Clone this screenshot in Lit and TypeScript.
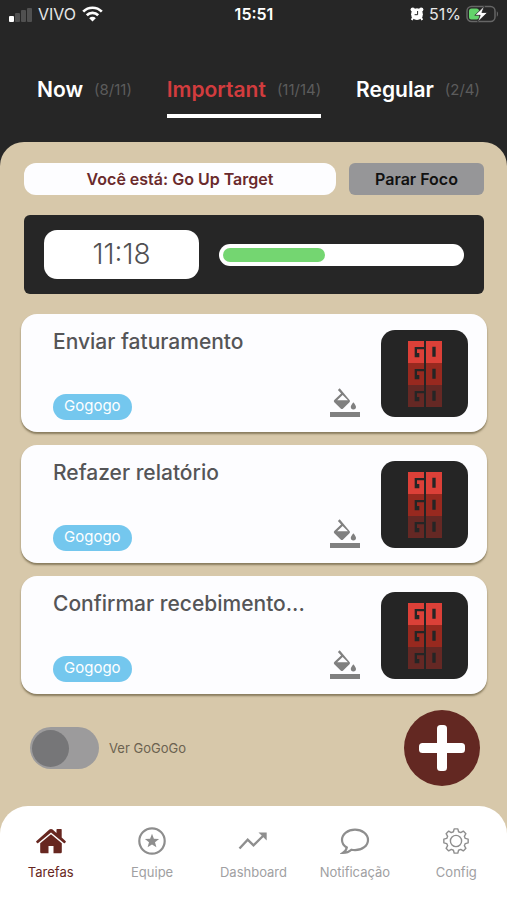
import { LitElement, html, css, svg } from "lit";
import { customElement, property, state } from "lit/decorators.js";
import { classMap } from "lit/directives/class-map.js";
import { styleMap } from "lit/directives/style-map.js";

const base = css`
  * {
    box-sizing: border-box;
  }
  svg {
    display: block;
    flex: none;
  }
  button {
    font: inherit;
    color: inherit;
    border: 0;
    padding: 0;
    background: none;
    cursor: pointer;
  }
`;

@customElement("status-bar")
class StatusBar extends LitElement {
  static styles = [
    base,
    css`
      :host {
        display: grid;
        grid-template-columns: 1fr auto 1fr;
        align-items: center;
        height: 28px;
        padding: 0 8px 0 9px;
        font-size: 16px;
        line-height: 20px;
        color: #e8e8e8;
      }
      .side {
        display: flex;
        align-items: center;
        gap: 6px;
      }
      .end {
        justify-content: flex-end;
        gap: 5px;
      }
      .clock {
        font-weight: 600;
        color: #fff;
      }
    `,
  ];

  render() {
    return html`
      <div class="side">
        <svg width="23" height="15" viewBox="0 0 23 15">
          <rect x="0" y="9" width="5" height="6" rx="1" fill="#fff" />
          <rect x="6" y="6" width="5" height="9" rx="1" fill="#505050" />
          <rect x="12" y="3" width="5" height="12" rx="1" fill="#505050" />
          <rect x="18" y="1" width="5" height="14" rx="1" fill="#505050" />
        </svg>
        <span>VIVO</span>
        <svg width="21" height="16" viewBox="0 0 21 16" fill="none" stroke="#fff" stroke-width="2.7">
          <path d="M1.2 5.6a13.2 13.2 0 0 1 18.6 0" />
          <path d="M4.8 9.3a8 8 0 0 1 11.4 0" />
          <path d="M10.5 15.6 7.2 12.2a4.7 4.7 0 0 1 6.6 0Z" fill="#fff" stroke="none" />
        </svg>
      </div>
      <span class="clock">15:51</span>
      <div class="side end">
        <svg width="14" height="14" viewBox="0 0 14 14">
          <path d="M3 10.5 1.8 13M11 10.5 12.2 13" stroke="#fff" stroke-width="2" />
          <circle cx="2.8" cy="2.6" r="2.2" fill="#fff" />
          <circle cx="11.2" cy="2.6" r="2.2" fill="#fff" />
          <circle cx="7" cy="7.2" r="5.9" fill="#fff" />
          <path d="M7.6 4v3.7H4.6" fill="none" stroke="#262626" stroke-width="1" />
        </svg>
        <span>51%</span>
        <svg width="33" height="18" viewBox="0 0 33 18">
          <rect x="1" y="1.5" width="28" height="15" rx="4.5" fill="none" stroke="#666" stroke-width="1.5" />
          <path d="M30.8 6.3c1.6.6 1.6 4.8 0 5.4Z" fill="#666" />
          <rect x="3" y="3.5" width="10" height="11" rx="2.5" fill="#63d46b" />
          <path d="M18.5 1 8.8 10.3h5.4L11.6 17l9.900-9.500h-5.600Z" fill="#fff" stroke="#262626" stroke-width="0.8" />
        </svg>
      </div>
    `;
  }
}

const block = (y: number, fill: string) => svg`
  <g transform="translate(0 ${y})" fill=${fill}>
    <path d="M0 0H48V18H20V49H34V36H27V25H48V66H0Z" />
    <path fill-rule="evenodd" d="M54 0H102V66H54ZM73 17V47H83V17Z" />
  </g>`;

@customElement("task-card")
class TaskCard extends LitElement {
  @property() heading = "";
  @property() tag = "";

  static styles = [
    base,
    css`
      :host {
        display: flex;
        gap: 21px;
        padding: 16px 19px 15px 32px;
        border-radius: 16px;
        background: #fdfdff;
        box-shadow: 0 2px 2px rgba(60, 50, 20, 0.5);
      }
      .body {
        flex: 1;
        min-width: 0;
        display: flex;
        flex-direction: column;
        justify-content: space-between;
      }
      .title {
        margin: 0;
        font-size: 21px;
        line-height: 24px;
        font-weight: 500;
        color: #555557;
        white-space: nowrap;
      }
      .foot {
        display: flex;
        align-items: flex-end;
        justify-content: space-between;
      }
      .tag {
        height: 26px;
        padding: 0 11px;
        margin-bottom: -3px;
        border-radius: 13px;
        background: #74c7ee;
        color: #fff;
        font-size: 15px;
        line-height: 23px;
      }
      .logo {
        flex: none;
        display: grid;
        place-items: center;
        width: 87px;
        height: 87px;
        border-radius: 14px;
        background: #252525;
      }
    `,
  ];

  render() {
    return html`
      <div class="body">
        <h2 class="title">${this.heading}</h2>
        <div class="foot">
          <span class="tag">${this.tag}</span>
          <button aria-label="Cor">
            <svg width="30" height="30" viewBox="0 0 30 30" fill="#808080">
              <path
                fill-rule="evenodd"
                d="M9.7 1.2 7.900 3l3.200 3.400L4.3 13.1q-1.1 1.1 0 2.2l6.400 6.2q1.2 1.1 2.4 0l6.400-6.200q1.1-1.1 0-2.200ZM12.6 7.9l5.300 5.400H7.2Z"
              />
              <path d="M23.4 15.2s-2.6 3-2.6 4.6a2.6 2.6 0 0 0 5.2 0c0-1.6-2.6-4.6-2.6-4.6Z" />
              <rect x="0" y="25" width="30" height="5" />
            </svg>
          </button>
        </div>
      </div>
      <div class="logo">
        <svg width="34" height="66" viewBox="0 0 102 198">
          ${block(0, "#dc4038")} ${block(66, "#98291f")} ${block(132, "#652824")}
        </svg>
      </div>
    `;
  }
}

const toothed = () => {
  const points: string[] = [];
  const teeth = 8;
  for (let i = 0; i < teeth; i++) {
    const mid = (i * 2 * Math.PI) / teeth;
    const steps: [number, number][] = [
      [-0.27, 9.6],
      [-0.15, 12.3],
      [0.15, 12.3],
      [0.27, 9.6],
    ];
    for (const [turn, r] of steps) {
      points.push(`${(13 + r * Math.sin(mid + turn)).toFixed(2)},${(13 - r * Math.cos(mid + turn)).toFixed(2)}`);
    }
  }
  return points.join(" ");
};

const icons = {
  home: svg`<svg width="30" height="26" viewBox="0 0 30 26" fill="#672720">
    <path d="M15 .9q.9 0 1.6.6L20.5 5V1.600q0-.6.6-.6h4q.6 0 .6.6v8l3.8 3.4q.7.6.1 1.3l-.7.8q-.5.5-1.1 0L15 4.4 2.2 15.1q-.6.5-1.1 0l-.7-.8q-.6-.7.1-1.3L13.4 1.5Q14.1.9 15 .9Z" />
    <path d="M15 6.2 25.8 15.3V24q0 1.2-1.2 1.2H17.500V18h-5v7.200H5.400Q4.2 25.2 4.2 24V15.300Z" />
  </svg>`,
  star: svg`<svg width="28" height="28" viewBox="0 0 28 28" fill="#8e8e8e">
    <circle cx="14" cy="14" r="12.7" fill="none" stroke="#8e8e8e" stroke-width="2.2" />
    <path d="m14 6.8 1.9 4.9 5.2.2-4.1 3.3 1.4 5.1-4.4-2.9-4.4 2.9 1.4-5.1-4.1-3.3 5.2-.2Z" />
  </svg>`,
  trend: svg`<svg width="30" height="20" viewBox="0 0 30 20">
    <path d="m1.5 17.5 8.2-8.8 5.8 5.6L26 4" fill="none" stroke="#8e8e8e" stroke-width="2.4" />
    <path d="M20.5 1.5h8.2v8Z" fill="#8e8e8e" />
  </svg>`,
  chat: svg`<svg width="30" height="28" viewBox="0 0 30 28" fill="none" stroke="#8e8e8e" stroke-width="2.2">
    <path d="M6.800 20.5C3.8 18.6 2 15.9 2 12.9 2 7.2 7.8 2.6 15 2.6s13 4.600 13 10.300S22.200 23.2 15 23.2q-1.9 0-3.600-.4Q8 26 2.800 26q3.400-2.200 4-5.500Z" />
  </svg>`,
  gear: svg`<svg width="26" height="26" viewBox="0 0 26 26" fill="none" stroke="#8e8e8e" stroke-width="1.4" stroke-linejoin="round">
    <polygon points=${toothed()} />
    <circle cx="13" cy="13" r="5.6" />
  </svg>`,
};

const tabs = [
  { name: "Now", count: "(8/11)" },
  { name: "Important", count: "(11/14)" },
  { name: "Regular", count: "(2/4)" },
];

const tasks = ["Enviar faturamento", "Refazer relatório", "Confirmar recebimento..."];

const links = [
  { label: "Tarefas", icon: icons.home, here: true },
  { label: "Equipe", icon: icons.star, here: false },
  { label: "Dashboard", icon: icons.trend, here: false },
  { label: "Notificação", icon: icons.chat, here: false },
  { label: "Config", icon: icons.gear, here: false },
];

@customElement("app-root")
class AppRoot extends LitElement {
  @state() private current = "Important";
  private progress = 43;

  static styles = [
    base,
    css`
      :host {
        display: flex;
        flex-direction: column;
        min-height: 100vh;
        background: #262626;
        font-family: Inter, "Open Sans", sans-serif;
      }
      .tabs {
        display: flex;
        justify-content: space-between;
        padding: 48px 27px 24px 37px;
      }
      .tab {
        display: flex;
        align-items: center;
        gap: 11px;
        height: 42px;
        padding-bottom: 10px;
        border-bottom: 4px solid transparent;
        color: #fff;
        font-size: 21px;
        font-weight: 600;
        line-height: 24px;
      }
      .tab.on {
        border-color: #fff;
        color: #d23c3e;
      }
      .count {
        font-size: 15px;
        font-weight: 400;
        color: #5c5c5c;
      }
      .sheet {
        flex: 1;
        display: flex;
        flex-direction: column;
        border-radius: 24px 24px 0 0;
        background: #d7c8aa;
      }
      .main {
        flex: 1;
        display: flex;
        flex-direction: column;
        gap: 20px;
        padding: 21px 23px 20px 24px;
      }
      .focus {
        display: flex;
        gap: 13px;
        font-size: 16px;
        font-weight: 600;
        line-height: 32px;
        text-align: center;
      }
      .where {
        flex: 1;
        border-radius: 12px;
        background: #fdfdff;
        color: #6a2a2c;
      }
      .stop {
        width: 135px;
        border-radius: 6px;
        background: #969698;
        color: #111;
      }
      .timer {
        display: flex;
        align-items: center;
        gap: 20px;
        padding: 15px 20px;
        border-radius: 6px;
        background: #262626;
      }
      .time {
        width: 155px;
        border-radius: 13px;
        background: #fff;
        color: #505052;
        font-size: 28px;
        font-weight: 300;
        line-height: 49px;
        text-align: center;
      }
      .track {
        flex: 1;
        height: 22px;
        padding: 4px;
        border-radius: 11px;
        background: #fff;
      }
      .fill {
        height: 14px;
        border-radius: 7px;
        background: #74d671;
      }
      .list {
        display: flex;
        flex-direction: column;
        gap: 13px;
        margin: 0 -3px;
      }
      .actions {
        display: flex;
        align-items: center;
        justify-content: space-between;
        padding: 0 4px 0 6px;
        margin-top: -4px;
      }
      .see {
        display: flex;
        align-items: center;
        gap: 10px;
        color: #6b6250;
        font-size: 13px;
        line-height: 16px;
      }
      .switch {
        appearance: none;
        display: flex;
        align-items: center;
        width: 69px;
        height: 42px;
        margin: 0;
        padding: 2px;
        border-radius: 21px;
        background: #9c9b9c;
      }
      .switch::before {
        content: "";
        width: 37px;
        height: 37px;
        border-radius: 50%;
        background: #767678;
      }
      .switch:checked {
        justify-content: flex-end;
      }
      .add {
        display: grid;
        place-items: center;
        width: 76px;
        height: 76px;
        border-radius: 50%;
        background: #632822;
      }
      .nav {
        display: grid;
        grid-template-columns: repeat(5, 1fr);
        height: 94px;
        padding-top: 20px;
        border-radius: 28px 28px 0 0;
        background: #fff;
      }
      .link {
        display: flex;
        flex-direction: column;
        align-items: center;
        gap: 8px;
        color: #a0a0a2;
        font-size: 13px;
        line-height: 16px;
        text-decoration: none;
      }
      .link.here {
        color: #672720;
      }
      .glyph {
        display: grid;
        place-items: center;
        height: 30px;
      }
    `,
  ];

  render() {
    return html`
      <status-bar></status-bar>
      <div class="tabs" role="tablist">
        ${tabs.map(
          (t) => html`<button
            role="tab"
            class=${classMap({ tab: true, on: t.name === this.current })}
            aria-selected=${t.name === this.current}
            @click=${() => (this.current = t.name)}
          >
            ${t.name}<span class="count">${t.count}</span>
          </button>`
        )}
      </div>
      <div class="sheet">
        <main class="main">
          <div class="focus">
            <div class="where">Você está: Go Up Target</div>
            <button class="stop">Parar Foco</button>
          </div>
          <div class="timer">
            <div class="time">11:18</div>
            <div class="track" role="progressbar" aria-valuenow=${this.progress} aria-label="Tempo">
              <div class="fill" style=${styleMap({ width: `${this.progress}%` })}></div>
            </div>
          </div>
          <div class="list">
            ${tasks.map((t) => html`<task-card .heading=${t} .tag=${"Gogogo"}></task-card>`)}
          </div>
          <div class="actions">
            <label class="see"><input class="switch" type="checkbox" />Ver GoGoGo</label>
            <button class="add" aria-label="Adicionar">
              <svg width="46" height="46" viewBox="0 0 46 46" fill="#fff">
                <rect x="18" y="0" width="10" height="46" rx="3.5" />
                <rect x="0" y="18" width="46" height="10" rx="3.5" />
              </svg>
            </button>
          </div>
        </main>
        <nav class="nav">
          ${links.map(
            (l) => html`<a class=${classMap({ link: true, here: l.here })} href="#">
              <span class="glyph">${l.icon}</span>${l.label}
            </a>`
          )}
        </nav>
      </div>
    `;
  }
}
